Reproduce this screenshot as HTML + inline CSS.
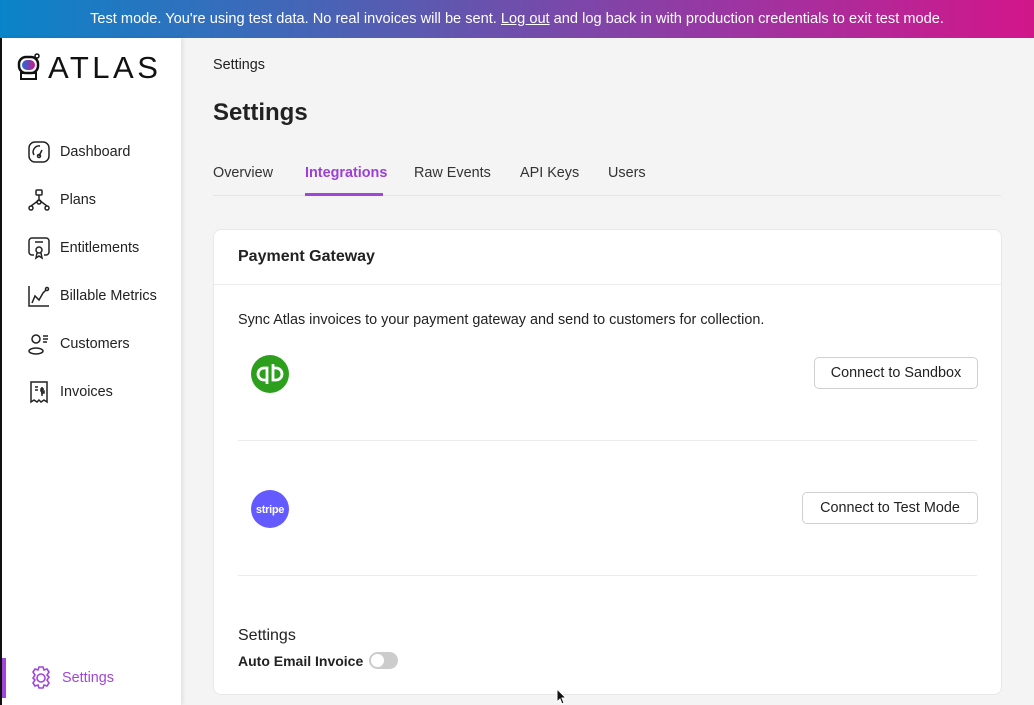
<!DOCTYPE html>
<html><head><style>
*{margin:0;padding:0;box-sizing:border-box}
body{width:1034px;height:705px;overflow:hidden;font-family:"Liberation Sans",sans-serif;background:#f4f4f4;color:#222;position:relative}
.banner{position:absolute;left:0;top:0;width:1034px;height:38px;background:linear-gradient(90deg,#0a84c8,#5a5ab0 40%,#9a36a2 70%,#d2168a);color:#fff;font-size:14.6px;text-align:center;line-height:38px}
.banner u{text-decoration:underline}
.side{position:absolute;left:0;top:38px;width:181px;height:667px;background:#fff;border-left:2px solid #111;box-shadow:2px 0 4px rgba(0,0,0,.08)}
.logo{position:absolute;left:46px;top:12px;font-size:31px;letter-spacing:3.5px;font-weight:normal;color:#111}
.nav{position:absolute;left:58px;font-size:14.4px;color:#222}
.ic{position:absolute;left:24px;width:26px;height:26px}
.main{position:absolute;left:213px}
.tab{position:absolute;top:165px;font-size:14.4px;color:#333}
.card{position:absolute;left:213px;top:229px;width:789px;height:466px;background:#fff;border:1px solid #e8e8e8;border-radius:8px}
.btn{position:absolute;border:1px solid #d0d0d0;border-radius:5px;background:#fff;font-size:14.4px;text-align:center;color:#222}
.hr{position:absolute;left:24px;width:739px;height:1px;background:#ececec}
</style></head><body>
<div class="banner">Test mode. You're using test data. No real invoices will be sent. <u>Log out</u> and log back in with production credentials to exit test mode.</div>
<div class="side">
<svg style="position:absolute;left:14px;top:15px" width="26" height="28" viewBox="0 0 26 28"><circle cx="21" cy="3" r="2" fill="none" stroke="#111" stroke-width="1.5"/><rect x="3" y="4" width="19" height="16" rx="7" fill="none" stroke="#111" stroke-width="2.5"/><rect x="6" y="7" width="13" height="10" rx="5" fill="url(#g)"/><defs><linearGradient id="g"><stop offset="0" stop-color="#1c6fd8"/><stop offset="1" stop-color="#d0168a"/></linearGradient></defs><rect x="5" y="20" width="15" height="6" fill="none" stroke="#111" stroke-width="2"/></svg>
<div class="logo">ATLAS</div>
<svg class="ic" style="top:101px" viewBox="0 0 26 26" fill="none" stroke="#222" stroke-width="1.5"><rect x="3" y="3" width="20" height="20" rx="6"/><path d="M8 16a6 6 0 0 1 6-9M13 17l3-6"/><circle cx="13" cy="17" r="1.5"/></svg>
<div class="nav" style="top:106px">Dashboard</div>
<svg class="ic" style="top:149px" viewBox="0 0 26 26" fill="none" stroke="#222" stroke-width="1.5"><rect x="10" y="3" width="6" height="5" rx="1"/><path d="M13 8v5M5 19l8-6 8 6"/><circle cx="13" cy="15" r="2"/><circle cx="5" cy="21" r="2"/><circle cx="21" cy="21" r="2"/></svg>
<div class="nav" style="top:154px">Plans</div>
<svg class="ic" style="top:197px" viewBox="0 0 26 26" fill="none" stroke="#222" stroke-width="1.5"><path d="M8 20H6a3 3 0 0 1-3-3V6a3 3 0 0 1 3-3h14a3 3 0 0 1 3 3v11a3 3 0 0 1-3 3h-2M9 7h8"/><circle cx="13" cy="15" r="3"/><path d="M11 18l-1 5 3-2 3 2-1-5"/></svg>
<div class="nav" style="top:202px">Entitlements</div>
<svg class="ic" style="top:245px" viewBox="0 0 26 26" fill="none" stroke="#222" stroke-width="1.5"><path d="M3 3v20h20M6 20l3-7 4 4 4-7 3-3"/><circle cx="21" cy="6" r="1.5"/></svg>
<div class="nav" style="top:250px">Billable Metrics</div>
<svg class="ic" style="top:293px" viewBox="0 0 26 26" fill="none" stroke="#222" stroke-width="1.5"><circle cx="10" cy="8" r="4"/><ellipse cx="10" cy="20" rx="7" ry="3"/><path d="M17 5h5M17 8h5M17 11h4"/></svg>
<div class="nav" style="top:298px">Customers</div>
<svg class="ic" style="top:341px" viewBox="0 0 26 26" fill="none" stroke="#222" stroke-width="1.5"><path d="M5 3h16v20l-3-2-3 2-2-2-2 2-3-2-3 2z"/><path d="M9 8h3M9 11h3M16 8v9M18 10h-3v2h3v2h-3"/></svg>
<div class="nav" style="top:346px">Invoices</div>
<div style="position:absolute;left:0;top:620px;width:4px;height:40px;background:#a046d8"></div>
<svg class="ic" style="left:26px;top:627px" viewBox="0 0 26 26" fill="none" stroke="#a046d8" stroke-width="1.6"><path d="M11 2h4l1 3 3-1 2 3-2 3 2 2-2 3 2 3-2 3-3-1-1 3h-4l-1-3-3 1-2-3 2-3-2-2 2-3-2-3 2-3 3 1z"/><circle cx="13" cy="13" r="4"/></svg>
<div class="nav" style="top:632px;left:60px;color:#a046d8">Settings</div>
</div>
<div class="main" style="top:57px;font-size:14.4px">Settings</div>
<div class="main" style="top:99px;font-size:24px;font-weight:bold">Settings</div>
<div class="tab" style="left:213px">Overview</div>
<div class="tab" style="left:305px;color:#9b3fd6;font-weight:bold">Integrations</div>
<div style="position:absolute;left:213px;top:195px;width:788px;height:1px;background:#e6e6e6"></div>
<div style="position:absolute;left:305px;top:193px;width:78px;height:3px;background:#a046d8"></div>
<div class="tab" style="left:414px">Raw Events</div>
<div class="tab" style="left:520px">API Keys</div>
<div class="tab" style="left:608px">Users</div>
<div class="card">
<div style="position:absolute;left:24px;top:18px;font-size:16px;font-weight:bold">Payment Gateway</div>
<div style="position:absolute;left:0;top:54px;width:787px;height:1px;background:#ececec"></div>
<div style="position:absolute;left:24px;top:82px;font-size:14.4px">Sync Atlas invoices to your payment gateway and send to customers for collection.</div>
<svg style="position:absolute;left:36px;top:124px" width="40" height="40" viewBox="0 0 40 40"><circle cx="20" cy="20" r="19" fill="#2ca01c"/><path d="M17 26h-3a6 6 0 0 1 0-12h3v16M23 14h3a6 6 0 0 1 0 12h-3V10" fill="none" stroke="#fff" stroke-width="2.8"/></svg>
<div class="btn" style="left:600px;top:127px;width:164px;height:32px;line-height:30px">Connect to Sandbox</div>
<div class="hr" style="top:210px"></div>
<svg style="position:absolute;left:36px;top:259px" width="40" height="40" viewBox="0 0 40 40"><circle cx="20" cy="20" r="19" fill="#635bff"/><text x="20" y="24" text-anchor="middle" font-family="Liberation Sans" font-weight="bold" font-size="11" fill="#fff" letter-spacing="-0.3">stripe</text></svg>
<div class="btn" style="left:588px;top:262px;width:176px;height:32px;line-height:30px">Connect to Test Mode</div>
<div class="hr" style="top:345px"></div>
<div style="position:absolute;left:24px;top:397px;font-size:16px">Settings</div>
<div style="position:absolute;left:24px;top:423px;font-size:14px;font-weight:bold">Auto Email Invoice</div>
<div style="position:absolute;left:155px;top:422px;width:29px;height:17px;border-radius:9px;background:#ccc"><div style="position:absolute;left:2px;top:2px;width:13px;height:13px;border-radius:50%;background:#fff"></div></div>
</div>
<svg style="position:absolute;left:556px;top:688px" width="12" height="17" viewBox="0 0 12 17"><path d="M1 1v13l3-3 2 5 2-1-2-5h4z" fill="#111" stroke="#fff" stroke-width="1"/></svg>
</body></html>
